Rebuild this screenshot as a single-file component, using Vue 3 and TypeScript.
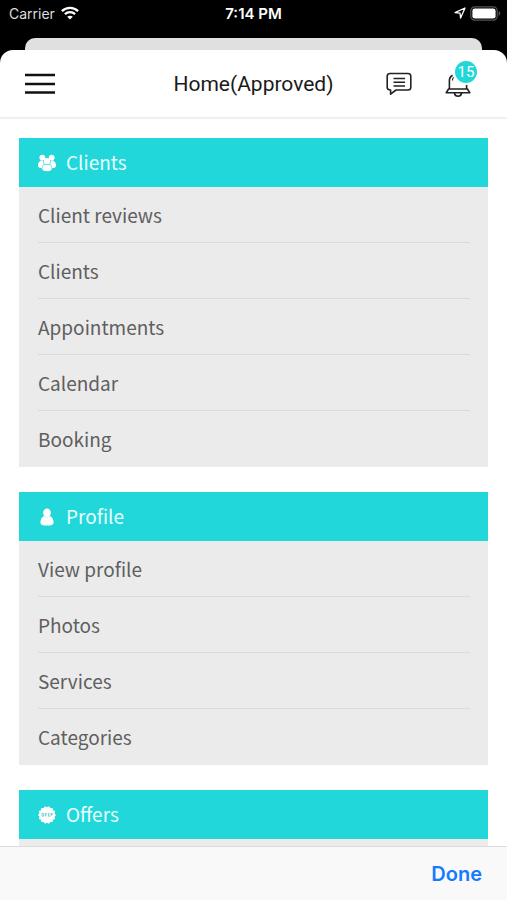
<script setup lang="ts">
type IconName = 'group' | 'person' | 'offer'

interface Section {
  title: string
  icon: IconName
  items: string[]
}

const unread: number = 15

const sections: Section[] = [
  {
    title: 'Clients',
    icon: 'group',
    items: ['Client reviews', 'Clients', 'Appointments', 'Calendar', 'Booking'],
  },
  {
    title: 'Profile',
    icon: 'person',
    items: ['View profile', 'Photos', 'Services', 'Categories'],
  },
  { title: 'Offers', icon: 'offer', items: [] },
]

// Scalloped outline of the offer seal, built from alternating radii.
const sealPoints: string = Array.from({ length: 28 }, (_, i) => {
  const radius = i % 2 === 0 ? 9 : 7.7
  const angle = (i * Math.PI) / 14
  return `${(9 + radius * Math.cos(angle)).toFixed(2)},${(9 + radius * Math.sin(angle)).toFixed(2)}`
}).join(' ')
</script>

<template>
  <div class="screen">
    <div class="status">
      <div class="carrier">
        <span>Carrier</span>
        <svg width="18" height="14" viewBox="0 0 18 14" fill="none" stroke="#fff" stroke-width="2.3" aria-hidden="true">
          <path d="M0.9 5.1C5.4 0.7 12.6 0.7 17.1 5.1" />
          <path d="M3.9 8.2C6.8 5.5 11.2 5.5 14.1 8.2" />
          <path d="M9 13.6L6.2 10.8C7.8 9.4 10.2 9.4 11.8 10.8Z" fill="#fff" stroke="none" />
        </svg>
      </div>
      <span class="time">7:14 PM</span>
      <div class="indicators">
        <svg width="12" height="12" viewBox="0 0 12 12" fill="none" stroke="#fff" stroke-width="1.3" stroke-linejoin="round" aria-hidden="true">
          <path d="M11 1L1 5.6L6 6.1L6.6 11Z" />
        </svg>
        <svg width="31" height="15" viewBox="0 0 31 15" aria-hidden="true">
          <rect x="0.8" y="0.8" width="26.4" height="13.4" rx="4" fill="none" stroke="#555" stroke-width="1.2" />
          <rect x="2.4" y="2.4" width="23.2" height="10.2" rx="2.4" fill="#fff" />
          <path d="M28.6 5V10C30.8 9.2 30.8 5.8 28.6 5Z" fill="#555" />
        </svg>
      </div>
    </div>
    <div class="backdrop"></div>
    <div class="sheet">
      <header class="bar">
        <div class="side">
          <button class="icon-button" type="button" aria-label="Menu">
            <svg width="30" height="22" viewBox="0 0 30 22" stroke="#111" stroke-width="2.4" aria-hidden="true">
              <path d="M0 2H30M0 11H30M0 19.5H30" />
            </svg>
          </button>
        </div>
        <h1>Home(Approved)</h1>
        <div class="side actions">
          <button class="icon-button" type="button" aria-label="Messages">
            <svg width="26" height="24" viewBox="0 0 26 24" fill="none" stroke="#222" stroke-width="1.6" stroke-linejoin="round" aria-hidden="true">
              <path d="M4 1.5H22Q24.8 1.5 24.8 4.3V15.2Q24.8 18 22 18H10L4.6 22.2V18Q1.2 18 1.2 15.2V4.3Q1.2 1.5 4 1.5Z" />
              <path d="M7.5 6.5H19M7.5 10.3H19M7.5 14H19" />
            </svg>
          </button>
          <button class="icon-button bell" type="button" aria-label="Notifications">
            <svg width="26" height="26" viewBox="0 0 26 26" fill="none" stroke="#222" stroke-width="1.6" stroke-linejoin="round" aria-hidden="true">
              <path d="M4.4 18V9Q4.6 5.6 7.6 4.2" />
              <path d="M7.6 9.6V8.2Q7.8 7 8.8 6.4" stroke-width="1.1" />
              <path d="M21.6 13V18" />
              <path d="M3.6 18H22.4L24.8 21.8H1.2Z" />
              <path d="M9.4 22Q10 25.2 13 25.2Q16 25.2 16.6 22" />
            </svg>
            <span class="badge">{{ unread }}</span>
          </button>
        </div>
      </header>
      <main class="content">
        <section v-for="section in sections" :key="section.title">
          <h2>
            <svg v-if="section.icon === 'group'" width="18" height="18" viewBox="0 0 18 18" fill="#fff" aria-hidden="true">
              <circle cx="4.3" cy="3.6" r="2.9" />
              <circle cx="13.7" cy="3.6" r="2.9" />
              <path d="M2.6 6.4Q-0.2 8.4 -0.2 11.6Q-0.2 14 3.8 14.2Q4.2 11.4 6 10.2Q5 8.6 5 6.6Z" />
              <path d="M15.4 6.4Q18.2 8.4 18.2 11.6Q18.2 14 14.2 14.2Q13.8 11.4 12 10.2Q13 8.6 13 6.6Z" />
              <circle cx="9" cy="7.2" r="3.3" />
              <path d="M6.6 10.5Q9 12 11.4 10.5Q13.8 11.9 13.8 14.5Q13.8 17.2 9 17.2Q4.2 17.2 4.2 14.5Q4.2 11.9 6.6 10.5Z" />
            </svg>
            <svg v-else-if="section.icon === 'person'" width="18" height="18" viewBox="0 0 18 18" fill="#fff" aria-hidden="true">
              <ellipse cx="9" cy="4.8" rx="3.9" ry="4.4" />
              <path d="M5.8 8Q9 10.6 12.2 8Q15.6 10.2 15.6 14.4Q15.6 17.6 9 17.6Q2.4 17.6 2.4 14.4Q2.4 10.2 5.8 8Z" />
            </svg>
            <svg v-else width="18" height="18" viewBox="0 0 18 18" aria-hidden="true">
              <polygon :points="sealPoints" fill="#fff" />
              <path d="M4 7.4V10.2H5.7V7.4ZM7.4 10.4V7.4H9M7.4 8.8H8.8M10.4 10.4V7.4H11.6M10.4 8.8H11.5M10.4 10.2H11.8M13 10.4V7.4H14.3V8.8H13" fill="none" stroke="#6ccfd4" stroke-width="0.9" />
            </svg>
            <span>{{ section.title }}</span>
          </h2>
          <ul>
            <li v-for="item in section.items" :key="item">
              <a href="#">{{ item }}</a>
            </li>
          </ul>
        </section>
      </main>
      <footer>
        <button class="done" type="button">Done</button>
      </footer>
    </div>
  </div>
</template>

<style>
body {
  background: #000;
}
</style>

<style scoped>
.screen {
  display: flex;
  flex-direction: column;
  height: 100vh;
  background: #000;
  font-family: Inter, "Liberation Sans", sans-serif;
}

.status {
  display: grid;
  grid-template-columns: 1fr auto 1fr;
  align-items: center;
  height: 28px;
  margin-bottom: 10px;
  padding: 0 6px 2px;
  box-sizing: border-box;
  color: #fff;
  font-size: 14px;
}

.carrier,
.indicators {
  display: flex;
  align-items: center;
  gap: 6px;
}

.carrier {
  padding-left: 3px;
  color: #ddd;
}

.indicators {
  justify-content: flex-end;
  gap: 4px;
}

.time {
  font-size: 15px;
  font-weight: 600;
}

.backdrop {
  height: 12px;
  margin: 0 25px;
  border-radius: 10px 10px 0 0;
  background: #e0e0e0;
}

.sheet {
  display: flex;
  flex: 1;
  flex-direction: column;
  min-height: 0;
  overflow: hidden;
  border-radius: 13px 13px 0 0;
  background: #fff;
}

.bar {
  display: grid;
  grid-template-columns: 1fr auto 1fr;
  align-items: center;
  height: 69px;
  padding: 0 25px;
  box-sizing: border-box;
  border-bottom: 2px solid #f0f0f0;
}

.side {
  display: flex;
  align-items: center;
}

.actions {
  justify-content: flex-end;
  gap: 33px;
  padding-right: 11px;
}

h1 {
  margin: 0;
  color: #1a1a1a;
  font-family: Roboto, sans-serif;
  font-size: 21px;
  font-weight: 400;
}

.icon-button {
  display: flex;
  padding: 0;
  border: 0;
  background: none;
}

.bell {
  position: relative;
}

.badge {
  position: absolute;
  top: -10px;
  right: -6px;
  width: 22px;
  border-radius: 50%;
  background: #21d7d9;
  box-shadow: 0 0 0 2px #fff;
  color: #fff;
  font-family: Roboto, sans-serif;
  font-size: 15px;
  line-height: 22px;
  text-align: center;
}

.content {
  display: flex;
  flex: 1;
  flex-direction: column;
  gap: 25px;
  min-height: 0;
  padding: 19px 19px 0;
  overflow-y: auto;
  scrollbar-width: none;
  font-family: "Noto Sans CJK SC", sans-serif;
  font-size: 19px;
}

section {
  flex-shrink: 0;
  background: #ebebeb;
}

h2 {
  display: flex;
  align-items: center;
  gap: 10px;
  height: 49px;
  margin: 0;
  padding: 0 19px;
  background: #21d7d9;
  color: #e6ffff;
  font-size: 19px;
  font-weight: 400;
  line-height: 28px;
}

h2 span {
  padding-bottom: 2px;
}

ul {
  min-height: 56px;
  margin: 0;
  padding: 0 18px 0 19px;
  list-style: none;
}

li {
  height: 56px;
  box-sizing: border-box;
  border-bottom: 1px solid #dadada;
}

li:last-child {
  border-bottom: 0;
}

a {
  display: block;
  color: #5f5f5f;
  line-height: 56px;
  text-decoration: none;
}

footer {
  display: flex;
  align-items: center;
  justify-content: flex-end;
  height: 54px;
  padding: 0 25px;
  box-sizing: border-box;
  border-top: 1px solid #dcdcdc;
  background: #f9f9f9;
}

.done {
  padding: 0;
  border: 0;
  background: none;
  color: #147aff;
  font-family: Inter, sans-serif;
  font-size: 20px;
  font-weight: 600;
}
</style>
